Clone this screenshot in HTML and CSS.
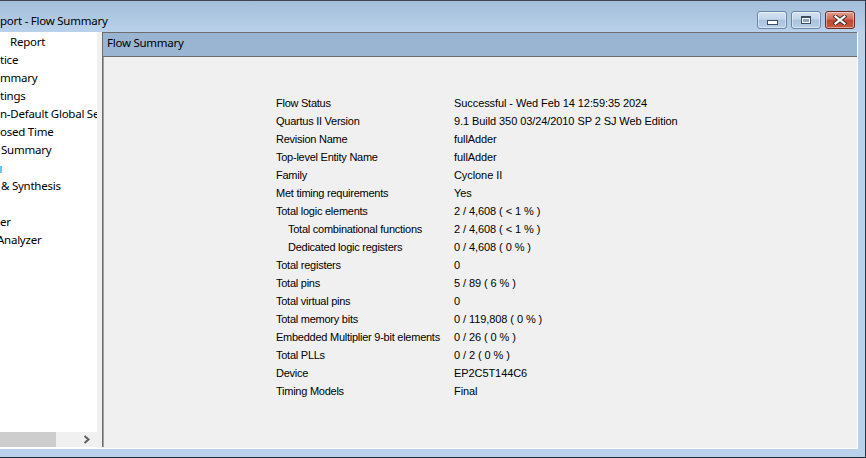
FILE: index.html
```html
<!DOCTYPE html>
<html>
<head>
<meta charset="utf-8">
<link rel="stylesheet" href="styles.css">
</head>
<body>
<div class="window">
  <div class="titlebar">
    <div class="title">port - Flow Summary</div>
    <div class="buttons">
      <div class="wbtn min"><span class="glyph-min"></span></div>
      <div class="wbtn max"><span class="glyph-max"></span></div>
      <div class="wbtn close">
        <svg width="14" height="10" viewBox="0 0 14 10">
          <path d="M2.5 1.5 L11.5 8.5 M11.5 1.5 L2.5 8.5" stroke="#3b2a2a" stroke-width="4" stroke-linecap="square"/>
          <path d="M2.5 1.5 L11.5 8.5 M11.5 1.5 L2.5 8.5" stroke="#ffffff" stroke-width="2.2" stroke-linecap="square"/>
        </svg>
      </div>
    </div>
  </div>
  <div class="client">
    <div class="tree">
      <ul class="items">
        <li class="i-report">Report</li>
        <li>tice</li>
        <li>mmary</li>
        <li>tings</li>
        <li>n-Default Global Settings</li>
        <li>osed Time</li>
        <li class="i-sum">Summary</li>
        <li><span class="mark"></span></li>
        <li class="i-syn">&amp; Synthesis</li>
        <li></li>
        <li>er</li>
        <li class="i-ana">Analyzer</li>
      </ul>
      <div class="hscroll">
        <div class="thumb"></div>
        <div class="arrow">
          <svg width="8" height="9" viewBox="0 0 8 9"><path d="M1.5 1 L5.5 4.5 L1.5 8" fill="none" stroke="#606060" stroke-width="2"/></svg>
        </div>
      </div>
    </div>
    <div class="splitter"></div>
    <div class="panel">
      <div class="panel-head">Flow Summary</div>
      <div class="panel-body">
        <table class="summary">
          <tr><td>Flow Status</td><td>Successful - Wed Feb 14 12:59:35 2024</td></tr>
          <tr><td>Quartus II Version</td><td>9.1 Build 350 03/24/2010 SP 2 SJ Web Edition</td></tr>
          <tr><td>Revision Name</td><td>fullAdder</td></tr>
          <tr><td>Top-level Entity Name</td><td>fullAdder</td></tr>
          <tr><td>Family</td><td>Cyclone II</td></tr>
          <tr><td>Met timing requirements</td><td>Yes</td></tr>
          <tr><td>Total logic elements</td><td>2 / 4,608 ( &lt; 1 % )</td></tr>
          <tr><td class="sub">Total combinational functions</td><td>2 / 4,608 ( &lt; 1 % )</td></tr>
          <tr><td class="sub">Dedicated logic registers</td><td>0 / 4,608 ( 0 % )</td></tr>
          <tr><td>Total registers</td><td>0</td></tr>
          <tr><td>Total pins</td><td>5 / 89 ( 6 % )</td></tr>
          <tr><td>Total virtual pins</td><td>0</td></tr>
          <tr><td>Total memory bits</td><td>0 / 119,808 ( 0 % )</td></tr>
          <tr><td>Embedded Multiplier 9-bit elements</td><td>0 / 26 ( 0 % )</td></tr>
          <tr><td>Total PLLs</td><td>0 / 2 ( 0 % )</td></tr>
          <tr><td>Device</td><td>EP2C5T144C6</td></tr>
          <tr><td>Timing Models</td><td>Final</td></tr>
        </table>
      </div>
    </div>
  </div>
</div>
</body>
</html>
```

FILE: styles.css
```css
html, body {
  margin: 0;
  padding: 0;
  width: 866px;
  height: 458px;
  overflow: hidden;
  background: #b9d1ea;
}
.window {
  width: 866px;
  height: 458px;
  box-sizing: border-box;
  border-top: 1px solid #3c4650;
  border-right: 1px solid #2a3a48;
  border-bottom: 1px solid #1d2a36;
  background: #b9d1ea;
  display: flex;
  flex-direction: column;
  font-family: "Noto Sans", "Open Sans", sans-serif;
}
.titlebar {
  height: 31px;
  flex: none;
  display: flex;
  align-items: flex-start;
  justify-content: space-between;
  background: linear-gradient(#a3bed9, #b9d1ea);
  padding-right: 10px;
}
.title {
  font-size: 11.5px;
  letter-spacing: -0.25px;
  color: #000;
  line-height: 16px;
  padding-top: 12px;
}
.buttons {
  display: flex;
  gap: 4px;
  padding-top: 10px;
}
.wbtn {
  width: 30px;
  height: 18px;
  box-sizing: border-box;
  border: 1px solid #6b87a8;
  border-radius: 3px;
  display: flex;
  align-items: center;
  justify-content: center;
  background: linear-gradient(#d6e3f1 0%, #c3d5ea 45%, #a9c1dd 50%, #b9cfe7 100%);
  box-shadow: inset 0 0 0 1px rgba(255,255,255,0.45);
}
.wbtn.close {
  border-color: #6b2a28;
  background: linear-gradient(#e2a08f 0%, #d06c57 45%, #c0462e 50%, #c85a42 100%);
}
.glyph-min {
  width: 9px;
  height: 3px;
  margin-top: 5px;
  background: #fff;
  border: 1px solid #3d4d63;
}
.glyph-max {
  width: 8px;
  height: 5px;
  margin-top: -1px;
  background: #8fa7c4;
  border: 1px solid #3d4d63;
  border-top-width: 2px;
  box-shadow: inset 0 0 0 1px #fff;
}
.client {
  flex: none;
  height: 417px;
  width: 858px;
  box-sizing: border-box;
  border-right: 1px solid #ffffff;
  border-bottom: 1px solid #ffffff;
  display: flex;
  background: #f0f0f0;
}
.tree {
  width: 97px;
  flex: none;
  background: #fff;
  display: flex;
  flex-direction: column;
  overflow: hidden;
}
.items {
  list-style: none;
  margin: 0;
  padding: 1px 0 0 0;
  flex: 1;
  font-size: 11.5px;
  letter-spacing: -0.25px;
  line-height: 18px;
  color: #000;
  white-space: nowrap;
  overflow: hidden;
}
.items li {
  height: 18px;
}
.i-report { padding-left: 10px; }
.i-sum { padding-left: 1px; }
.i-syn { padding-left: 1px; }
.i-ana { margin-left: -3px; }
.mark {
  display: inline-block;
  width: 2px;
  height: 7px;
  background: #66c8f0;
  vertical-align: -1px;
}
.hscroll {
  height: 15px;
  flex: none;
  background: #f0f0f0;
  display: flex;
  align-items: stretch;
  margin-bottom: 1px;
}
.thumb {
  width: 56px;
  background: #cdcdcd;
}
.arrow {
  flex: 1;
  display: flex;
  align-items: center;
  justify-content: flex-end;
  padding-right: 6px;
}
.splitter {
  width: 5px;
  flex: none;
  background: #f0f0f0;
}
.panel {
  flex: 1;
  display: flex;
  flex-direction: column;
  border-left: 1px solid #6d6d6d;
  box-shadow: inset 1px 0 0 #a0a0a0;
  background: #f0f0f0;
  margin-bottom: 1px;
}
.panel-head {
  flex: none;
  background: #9ab5d1;
  border-top: 1px solid #6d6d6d;
  border-bottom: 1px solid #6d6d6d;
  font-size: 11.5px;
  letter-spacing: -0.25px;
  line-height: 16px;
  padding-left: 4px;
  padding-top: 2px;
  height: 21px;
}
.panel-body {
  flex: 1;
  padding-top: 37px;
  padding-left: 173px;
}
.summary {
  border-collapse: collapse;
  font-family: "Liberation Sans", Arial, sans-serif;
  font-size: 11px;
  letter-spacing: -0.25px;
  color: #000;
}
.summary td {
  padding: 0;
  height: 18px;
  line-height: 18px;
  white-space: nowrap;
  vertical-align: middle;
}
.summary td + td {
  letter-spacing: -0.08px;
}
.summary td:first-child {
  width: 178px;
}
.summary td.sub {
  padding-left: 12px;
  width: 166px;
}
```
